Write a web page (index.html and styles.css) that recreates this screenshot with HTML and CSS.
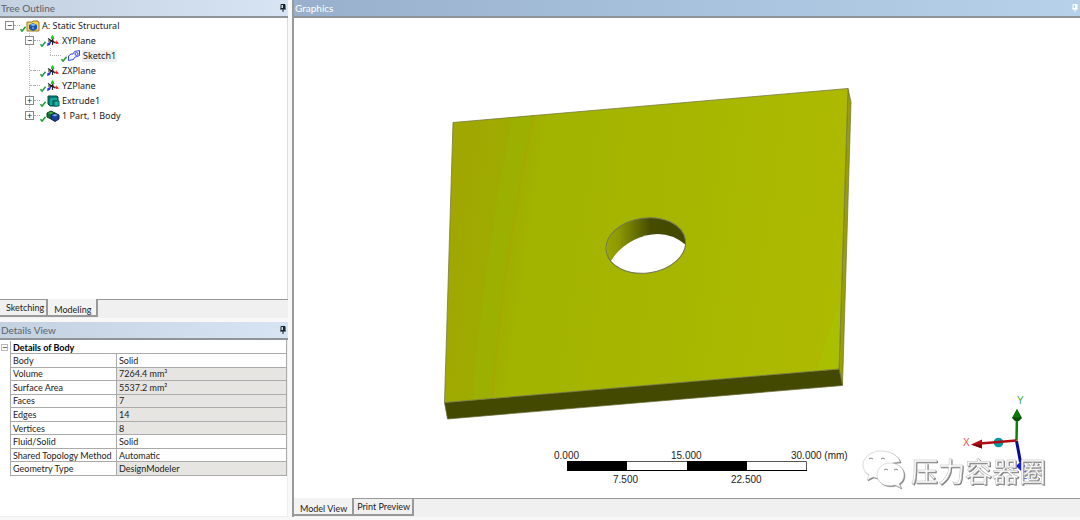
FILE: index.html
```html
<!DOCTYPE html>
<html lang="en">
<head>
<meta charset="utf-8">
<title>DesignModeler</title>
<link rel="stylesheet" href="styles.css">
</head>
<body>
<svg class="defs" aria-hidden="true">
  <symbol id="pin" viewBox="0 0 8 8"><path d="M2 .5h4v4H2zM1 5h6M4 5v3" fill="none" stroke="currentColor"/><path d="M4 .5h2v4H4z" fill="currentColor"/></symbol>
  <symbol id="check" viewBox="0 0 6 6"><path d="M.5 3.2 2 5.2 5.5.8" fill="none" stroke="#1fa033" stroke-width="1.5"/></symbol>
  <symbol id="plane" viewBox="0 0 14 12"><path d="M2 3.5 9 8M2 6h6M3 9 8 3M6.500 2v8" fill="none" stroke="#222" stroke-width="1.100"/><path d="M5 4V2L6.500 0 8 2v2z" fill="#16d516"/><path d="m8 6 2.500 1-.5-2 3 3.500-3 .5z" fill="#f11a1a"/><path d="m5 7-1 3-3 1 .5-3z" fill="#2636ff"/></symbol>
</svg>
<main class="app">
  <div class="side">
    <section class="panel tree-panel">
      <header class="bar"><h2>Tree Outline</h2><button class="pin" aria-label="Pin Tree Outline"><svg><use href="#pin"/></svg></button></header>
      <ul class="tree">
        <li><div class="row root"><button class="toggle" aria-label="Collapse">−</button><span class="dash"></span><svg class="check"><use href="#check"/></svg><svg class="icon" viewBox="0 0 14 12"><path d="M1 2h5l1-1h5v1h1v9H1z" fill="#f5d65e" stroke="#967b22"/><path d="m3 5 4-2 4 2v4l-4 2-4-2z" fill="#1b55b6"/><path d="m4 5 3-1.500L10 5 7 6z" fill="#82c2f3"/><path d="M7 7v2" stroke="#bcd" stroke-width="1"/></svg><span class="label">A: Static Structural</span></div>
          <ul class="branch">
            <li><div class="row"><button class="toggle" aria-label="Collapse">−</button><span class="dash"></span><svg class="check"><use href="#check"/></svg><svg class="icon"><use href="#plane"/></svg><span class="label">XYPlane</span></div>
              <ul class="leaf">
                <li><div class="row"><span class="dash"></span><svg class="check"><use href="#check"/></svg><svg class="icon" viewBox="0 0 14 12"><path d="M1.500 10.500V6L4 4h2l1.500-2.500 5-1v5l-5 2-1 2z" fill="#f4f5ff" stroke="#3546f4"/><circle cx="9.500" cy="4" r="1.500" fill="none" stroke="#3546f4"/></svg><span class="label selected">Sketch1</span></div></li>
              </ul></li>
            <li><div class="row"><span class="stub"></span><span class="dash"></span><svg class="check"><use href="#check"/></svg><svg class="icon"><use href="#plane"/></svg><span class="label">ZXPlane</span></div></li>
            <li><div class="row"><span class="stub"></span><span class="dash"></span><svg class="check"><use href="#check"/></svg><svg class="icon"><use href="#plane"/></svg><span class="label">YZPlane</span></div></li>
            <li><div class="row"><button class="toggle" aria-label="Expand">+</button><span class="dash"></span><svg class="check"><use href="#check"/></svg><svg class="icon" viewBox="0 0 14 12"><path d="M2 1h9l1 1v8l-1 1H4L2 9z" fill="#087a72" stroke="#034e4a"/><path d="M5 10V4h6" fill="none" stroke="#19d2c5"/><path d="M8 6h5v5H8z" fill="#12b9aa" stroke="#035853"/></svg><span class="label">Extrude1</span></div></li>
            <li><div class="row"><button class="toggle" aria-label="Expand">+</button><span class="dash"></span><svg class="check"><use href="#check"/></svg><svg class="icon" viewBox="0 0 14 12"><path d="m1 3 4-2 4 2v4L5 9 1 7z" fill="#14732a" stroke="#0a4319"/><path d="m2 3 3-1 3 1-3 1z" fill="#4cb64d"/><path d="m5 5 4-2 4 2v4l-4 2.500L5 9z" fill="#173f99" stroke="#0a2254"/><path d="m6 5 3-1 3 1-3 1.500z" fill="#69a8e9"/></svg><span class="label">1 Part, 1 Body</span></div></li>
          </ul></li>
      </ul>
      <nav class="tabs"><button class="tab">Sketching</button><button class="tab active">Modeling</button></nav>
    </section>
    <section class="panel details-panel">
      <header class="bar"><h2>Details View</h2><button class="pin" aria-label="Pin Details View"><svg><use href="#pin"/></svg></button></header>
      <div class="details">
        <button class="toggle small" aria-label="Collapse details">−</button>
        <table>
          <thead><tr><th colspan="2">Details of Body</th></tr></thead>
          <tbody>
            <tr><th>Body</th><td>Solid</td></tr>
            <tr><th>Volume</th><td class="locked">7264.4 mm³</td></tr>
            <tr><th>Surface Area</th><td class="locked">5537.2 mm²</td></tr>
            <tr><th>Faces</th><td class="locked">7</td></tr>
            <tr><th>Edges</th><td class="locked">14</td></tr>
            <tr><th>Vertices</th><td class="locked">8</td></tr>
            <tr><th>Fluid/Solid</th><td>Solid</td></tr>
            <tr><th>Shared Topology Method</th><td>Automatic</td></tr>
            <tr><th>Geometry Type</th><td class="locked">DesignModeler</td></tr>
          </tbody>
        </table>
      </div>
    </section>
  </div>
  <section class="graphics">
    <header class="bar dark"><h2>Graphics</h2><button class="pin" aria-label="Pin Graphics"><svg><use href="#pin"/></svg></button></header>
    <div class="canvas">
      <svg class="scene" viewBox="294 18 786 480">
        <defs>
          <linearGradient id="face" gradientUnits="userSpaceOnUse" x1="448" y1="230" x2="850" y2="290"><stop offset="0" stop-color="#a0a700"/><stop offset=".12" stop-color="#9fab00"/><stop offset=".2" stop-color="#a2b300"/><stop offset=".6" stop-color="#a7b700"/><stop offset="1" stop-color="#aeba00"/></linearGradient>
          <linearGradient id="bore" x1="0" x2="1"><stop offset="0" stop-color="#a1ad00"/><stop offset=".2" stop-color="#8d9900"/><stop offset=".55" stop-color="#464c00"/><stop offset="1" stop-color="#434800"/></linearGradient>
          <clipPath id="hole"><ellipse cx="645.800" cy="245.500" rx="40" ry="27.500" transform="rotate(-8 645.800 245.500)"/></clipPath>
        </defs>
        <path d="M848 88.500 851 102 842.500 385 839 369z" fill="#98a000" stroke="#6d7040" stroke-width=".7"/>
        <path d="M444.500 402.500 839 369l3.500 16.500L447.500 419z" fill="#434900" stroke="#666830" stroke-width=".7"/>
        <path d="M453 122.500 848 88.500 839 369 444.500 402.500z" fill="url(#face)"/>
        <path d="M512 117.500 534 115.500Q506 240 492 398l-20 2Q487 240 512 117.500z" fill="#9bb000"/>
        <path d="M534 115.500Q506 240 492 398" fill="none" stroke="#a5a900" stroke-width="2"/>
        <path d="M841 300Q826 336 817 371l22-2z" fill="#a9bf00"/>
        <path d="M453 122.500 848 88.500 839 369 444.500 402.500z" fill="none" stroke="#777a42" stroke-width=".8"/>
        <g clip-path="url(#hole)"><path d="M600 212h92v67h-92z" fill="url(#bore)"/><path d="M611 261C620 245 640 234 658 234q15 0 28 11v34h-75z" fill="#fff"/></g>
        <ellipse cx="645.800" cy="245.500" rx="40" ry="27.500" transform="rotate(-8 645.800 245.500)" fill="none" stroke="#777a58"/>
        <g class="scale">
          <path d="M567.500 461.500h239v9h-239z" fill="#fff" stroke="#555"/>
          <path d="M567 461h60v10h-60zM687 461h60v10h-60z"/>
          <path d="M567 470.500h240"/>
          <text x="554" y="459">0.000</text><text x="671" y="459">15.000</text><text x="791" y="459">30.000 (mm)</text>
          <text x="613" y="483">7.500</text><text x="731" y="483">22.500</text>
        </g>
        <g class="triad">
          <path d="M1016.500 440.500 1017 415" stroke="#078407" stroke-width="2.500"/><path d="M1017 409 1022 418l-3 3h-4l-3-3z" fill="#035003"/><path d="m1017 409-4.500 8.500h8z" fill="#087b08"/>
          <path d="m1016.500 441 4 21" stroke="#080c91" stroke-width="3"/><path d="m1016 466 5-5 4 5-4 5z" fill="#1117e8"/>
          <circle cx="998.500" cy="442.500" r="4.800" fill="#0799a2"/>
          <path d="M1016.500 440.500 980 443.500" stroke="#b10d12" stroke-width="2.500"/><path d="m971 444.500 11-5v9z" fill="#b30c12"/><path d="m971 444.500 11 0v4z" fill="#760609"/>
          <text x="963" y="446" fill="#f45050">X</text><text x="1017" y="404" fill="#42a642">Y</text><text x="1021" y="479" fill="#4b4bf0">Z</text>
        </g>
        <g class="mark">
          <path d="M881 451c-10 0-18 6-18 14 0 5 3 8 6 10l-2 5 6-3c3 1 7 2 11 1-2-10 5-16 16-16-1-6-9-11-19-11z"/>
          <path d="M890 463c8 0 14 5 14 12 0 4-2 7-5 9l2 4-6-3c-10 3-18-3-18-10 0-7 6-12 13-12z"/>
          <path d="M869 459q2-2 4 0M881 459q2-2 4 0M884 470q2-2 4 0M894 470q2-2 4 0" class="eyes"/>
          <text x="911" y="482">压力容器圈</text>
        </g>
      </svg>
    </div>
    <nav class="tabs"><button class="tab active">Model View</button><button class="tab">Print Preview</button></nav>
  </section>
</main>
</body>
</html>
```
FILE: styles.css
```css
* { box-sizing: border-box; }
body { margin: 0; background: #f8f8f8; color: #222; font: 9px/12px "Noto Sans", "Noto Sans CJK SC", sans-serif; }
button { margin: 0; padding: 0; border: 0; background: none; font: inherit; color: inherit; }
ul { margin: 0; padding: 0; list-style: none; }
.defs { position: absolute; width: 0; height: 0; }
.app { display: flex; gap: 4px; height: 100vh; padding-bottom: 3px; }
.side { display: flex; flex-direction: column; gap: 4px; flex: 0 0 288px; }
.panel { display: flex; flex-direction: column; }
.tree-panel { flex: 1; min-height: 0; }
.details-panel { flex: 0 0 195px; }
.bar { display: flex; flex: none; align-items: center; justify-content: space-between; height: 18px; padding: 0 1px; border-bottom: 2px solid #8f9499; background: linear-gradient(90deg, #c4d1e1, #d7e4f3); color: #5c6368; }
.bar h2 { margin: 0; font: 10px/18px Lato, sans-serif; }
.bar.dark { background: linear-gradient(90deg, #98b0cc, #b7d1eb); color: #fff; }
.pin { display: flex; color: #182026; }
.dark .pin { color: #fff; }
.pin svg { width: 8px; height: 8px; }
.tree { flex: 1; background: #fff; border-right: 1px solid #ddd; }
.row { display: flex; align-items: center; height: 15px; padding-left: 25px; }
.row.root { padding-left: 5px; }
.branch { background: repeating-linear-gradient(#bbb 0 1px, transparent 1px 2px) 29px 0 / 1px 83px no-repeat; }
.leaf .row { padding-left: 50px; background: repeating-linear-gradient(#bbb 0 1px, transparent 1px 2px) 50px 0 / 1px 8px no-repeat; }
.leaf .dash { width: 11px; }
.toggle { width: 9px; height: 9px; flex: none; border: 1px solid #888; background: #fff; font-size: 9px; line-height: 7px; text-align: center; }
.stub { width: 4px; margin-left: 5px; border-top: 1px dotted #aaa; }
.dash { width: 6px; flex: none; border-top: 1px dotted #aaa; }
.check { width: 6px; height: 6px; flex: none; align-self: flex-end; margin-bottom: 1px; }
.icon { width: 14px; height: 12px; flex: none; }
.label { margin-left: 1px; padding: 0 1px; font-size: 9px; }
.selected { background: #eee; }
.tabs { display: flex; flex: none; height: 19px; border-top: 1px solid #999; background: #f0f0f0; }
.tab { height: 17px; padding: 0 2px 0 3px; border-right: 2px solid #999; border-bottom: 2px solid #999; font: 9px/16px Lato, sans-serif; white-space: nowrap; }
.tab.active { height: 18px; margin-top: -1px; padding: 3px 5px 0 6px; background: #f3f3f3; }
.side .tab:first-child { padding-left: 6px; }
.details { display: flex; flex: 1; align-items: flex-start; padding: 0 0 0 1px; background: #fff; border: solid #eee; border-width: 0 1px 1px 0; }
.small { width: 7px; height: 7px; margin: 4px 2px 0 0; border-color: #bbb; line-height: 5px; }
table { flex: 1; height: 136px; border-collapse: collapse; }
th, td { height: 13px; padding: 0 2px; border: 1px solid #aaa; font: 9px/11px Lato, sans-serif; text-align: left; white-space: nowrap; }
tbody th { width: 106px; }
thead th { font-weight: 700; color: #000; border-top-color: #fff; }
.locked { background: #e6e5e1; }
.graphics { display: flex; flex: 1; flex-direction: column; min-width: 0; border-left: 2px solid #999; }
.canvas { flex: 1; min-height: 0; background: #fff; }
.scene { display: block; width: 100%; height: 100%; }
.scale text { font: 10px "Liberation Sans", Arial, sans-serif; fill: #222; }
.scale path:last-of-type { stroke: #000; }
.triad text { font: 10px "Liberation Sans", Arial, sans-serif; }
.mark { fill: #fff; stroke: #bbb; stroke-width: 0.5; filter: drop-shadow(1px 1px 0 #808080); }
.mark .eyes { fill: none; stroke: #888; stroke-width: 1; }
.mark text { font: 27px "Noto Sans CJK SC", sans-serif; }
```
